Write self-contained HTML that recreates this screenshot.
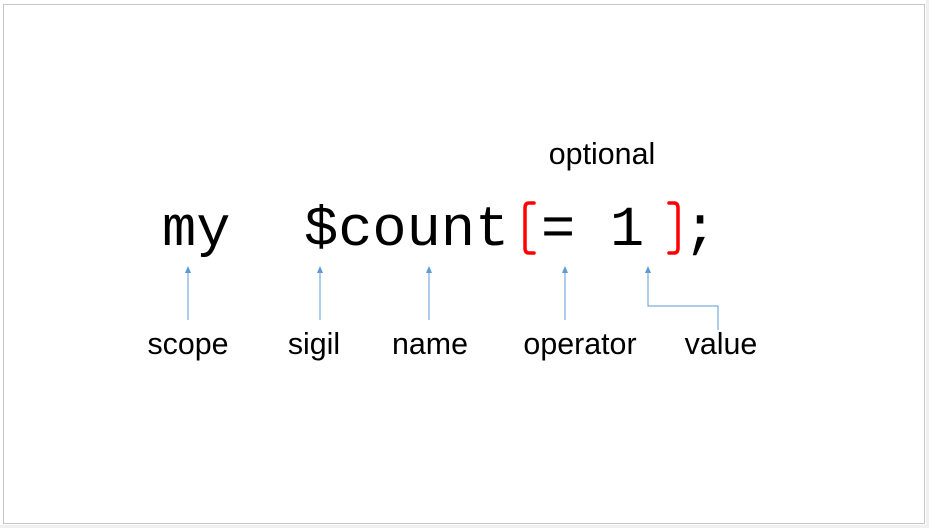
<!DOCTYPE html>
<html><head><meta charset="utf-8"><style>
html,body{margin:0;padding:0;width:929px;height:528px;overflow:hidden;background:#fff;position:relative}
.strip-r{position:absolute;left:926px;top:0;width:3px;height:528px;background:#f0f0f0}
.strip-b{position:absolute;left:0;top:525px;width:929px;height:3px;background:#f0f0f0}
.frame{position:absolute;left:3px;top:4px;width:920px;height:518px;border:1px solid #c6c6c6;background:#fff}
.code{position:absolute;font-family:"Liberation Mono",monospace;font-size:57px;color:#000;line-height:1;top:203px}
.lbl{position:absolute;font-family:"Liberation Sans",sans-serif;font-size:31px;color:#000;line-height:1;transform:translateX(-50%) scaleX(0.98);white-space:nowrap}
svg{position:absolute;left:0;top:0}
</style></head><body>
<div class="strip-r"></div><div class="strip-b"></div>
<div class="frame"></div>
<div class="code" style="left:162px">my</div>
<div class="code" style="left:304px">$count</div>
<div class="code" style="left:541px">=</div>
<div class="code" style="left:610px">1</div>
<div class="code" style="left:683px">;</div>
<div class="lbl" style="left:602px;top:138px">optional</div>
<div class="lbl" style="left:188px;top:328px">scope</div>
<div class="lbl" style="left:314px;top:328px">sigil</div>
<div class="lbl" style="left:430px;top:328px">name</div>
<div class="lbl" style="left:580px;top:328px">operator</div>
<div class="lbl" style="left:721px;top:328px">value</div>
<svg width="929" height="528">
<g fill="none" stroke="#ff0000" stroke-width="3.5" stroke-linecap="round">
<path d="M534,203 L529,203 Q525,203 525,208 L525,248 Q525,253 529,253 L534,253"/>
<path d="M669,203 L674,203 Q678,203 678,208 L678,248 Q678,253 674,253 L669,253"/>
</g>
<g stroke="#5b9bd5" stroke-width="1" fill="none">
<path d="M188,272 V320"/><path d="M320,272 V320"/><path d="M429,272 V320"/><path d="M565,272 V320"/>
<path d="M648,272 V306 H718 V330"/>
</g>
<g fill="#5b9bd5">
<path d="M185,273 L188,266 L191,273Z"/><path d="M317,273 L320,266 L323,273Z"/>
<path d="M426,273 L429,266 L432,273Z"/><path d="M562,273 L565,266 L568,273Z"/>
<path d="M645,273 L648,266 L651,273Z"/>
</g>
</svg>
</body></html>
